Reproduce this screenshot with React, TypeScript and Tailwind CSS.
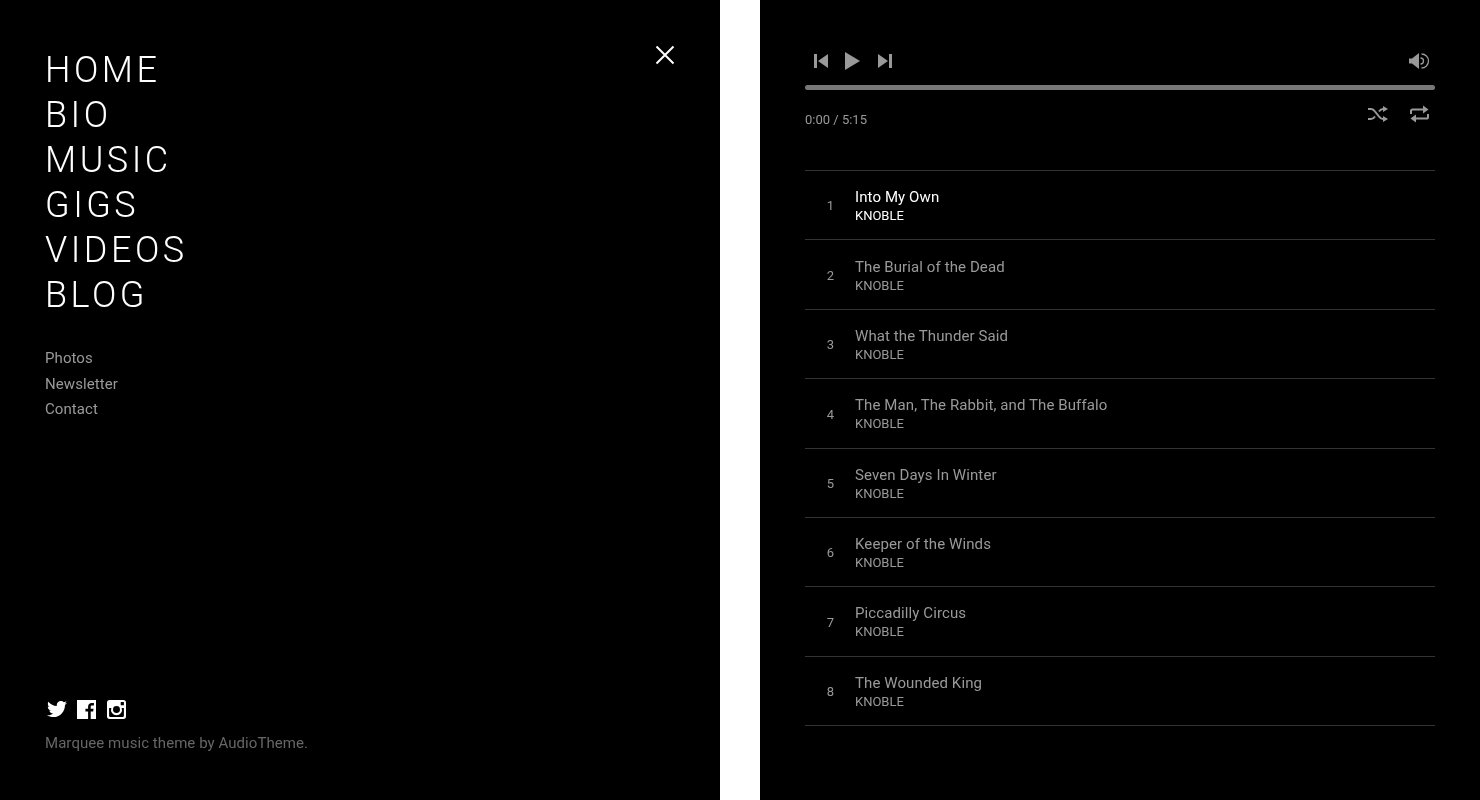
import { FaTwitter } from "react-icons/fa";

const navItems = ["HOME", "BIO", "MUSIC", "GIGS", "VIDEOS", "BLOG"];
const subItems = ["Photos", "Newsletter", "Contact"];
const tracks = [
  "Into My Own",
  "The Burial of the Dead",
  "What the Thunder Said",
  "The Man, The Rabbit, and The Buffalo",
  "Seven Days In Winter",
  "Keeper of the Winds",
  "Piccadilly Circus",
  "The Wounded King",
];

const FacebookIcon = () => (
  <svg width="19" height="19" viewBox="0 0 18 18" className="block">
    <path
      fill="#fff"
      d="M0 0h18v18h-5v-7h2.300l.4-2.700H13V6.600c0-.8.2-1.300 1.300-1.300H16V2.900c-.3 0-1.100-.1-2-.1-2 0-3.500 1.200-3.500 3.500v2H8V11h2.500v7H0z"
    />
  </svg>
);

const InstagramIcon = () => (
  <svg width="19" height="19" viewBox="0 0 18 18" className="block">
    <path
      fill="#fff"
      fillRule="evenodd"
      d="M2.500 0h13A2.500 2.500 0 0 1 18 2.500v13a2.500 2.500 0 0 1-2.500 2.500h-13A2.500 2.500 0 0 1 0 15.500v-13A2.500 2.500 0 0 1 2.500 0ZM13 2v3h3V2h-3ZM2 7.500v7.700c0 .5.3.8.8.8h12.400c.5 0 .8-.3.8-.8V7.500h-2.100a5.200 5.200 0 1 1-9.800 0H2ZM9 5.600a3.300 3.300 0 1 0 0 6.600 3.300 3.300 0 0 0 0-6.600Z"
    />
  </svg>
);

const PlayerControls = () => (
  <div className="flex items-center pl-[9px] h-[24px]">
    <svg width="14" height="14" viewBox="0 0 14 14" fill="#999" className="block">
      <path d="M0 0h3v14H0zM14 0v14L4 7z" />
    </svg>
    <svg width="15" height="18" viewBox="0 0 15 18" fill="#999" className="block ml-[17px]">
      <path d="M0 0l15 9L0 18z" />
    </svg>
    <svg width="14" height="14" viewBox="0 0 14 14" fill="#999" className="block ml-[18px]">
      <path d="M0 0v14l10-7zM11 0h3v14h-3z" />
    </svg>
  </div>
);

const VolumeIcon = () => (
  <svg width="21" height="18" viewBox="0 0 21 18" className="block mr-[5px]">
    <path fill="#999" d="M0 6.500h3L10 1v16L3 11.500H0z" />
    <path fill="none" stroke="#999" strokeWidth="1.300" d="M11.500 6a3 3 0 0 1 0 6M12.500 2a7 7 0 0 1 0 14" />
  </svg>
);

const ShuffleIcon = () => (
  <svg width="20" height="16" viewBox="0 0 20 16" className="block mt-[1px]">
    <path
      fill="none"
      stroke="#999"
      strokeWidth="2"
      d="M0 3h3c2 0 3 1 4 2.500l4 5c1 1.500 2 2.500 4 2.500h1M0 13h3c2 0 3-1 4-2.500M11 5.500C12 4 13 3 15 3h1"
    />
    <path fill="#999" d="M15 0l5 3-5 3zM15 10l5 3-5 3z" />
  </svg>
);

const RepeatIcon = () => (
  <svg width="19" height="18" viewBox="0 0 19 18" className="block">
    <path fill="none" stroke="#999" strokeWidth="2" d="M1 9V6c0-1 .5-1.600 1.500-1.600H14M18 9v3c0 1-.5 1.600-1.500 1.600H5" />
    <path fill="#999" d="M13 .5l5.500 4-5.500 4zM6 9.500l-5.500 4 5.500 4z" />
  </svg>
);

export default function App() {
  return (
    <div className="flex h-screen w-full bg-white font-['Roboto',sans-serif]">
      <aside className="w-[720px] bg-black flex flex-col px-[45px] pt-[48px] pb-[45px]">
        <div className="flex justify-between">
          <nav className="will-change-transform">
            {navItems.map((item) => (
              <div key={item} className="text-[36px] leading-[45px] font-light tracking-[3.5px] text-white">
                {item}
              </div>
            ))}
          </nav>
          <svg width="20" height="20" viewBox="0 0 20 20" className="block mt-[-3px]">
            <path stroke="#fff" strokeWidth="2" d="M1.500 1.500l17 17M18.500 1.500l-17 17" />
          </svg>
        </div>
        <div className="mt-[28px] will-change-transform">
          {subItems.map((item) => (
            <div key={item} className="text-[15px] leading-[25.500px] tracking-[0.08px] text-[#999]">
              {item}
            </div>
          ))}
        </div>
        <div className="mt-auto">
          <div className="flex items-center pl-[2px] text-white">
            <FaTwitter className="w-[20px] h-[20px]" />
            <div className="ml-[10px]">
              <FacebookIcon />
            </div>
            <div className="ml-[11px]">
              <InstagramIcon />
            </div>
          </div>
          <p className="mt-[12px] text-[15px] leading-[24px] tracking-[0.06px] text-[#666] will-change-transform">
            Marquee music theme by AudioTheme.
          </p>
        </div>
      </aside>

      <div className="w-[40px] bg-white" />

      <main className="w-[720px] bg-black px-[45px] pt-[49px]">
        <div className="flex items-center justify-between">
          <PlayerControls />
          <VolumeIcon />
        </div>
        <div className="mt-[12px] h-[5px] rounded-full bg-[#777]" />
        <div className="flex items-start justify-between mt-[16px] h-[64px]">
          <span className="text-[13px] leading-[28px] text-[#999] will-change-transform">0:00 / 5:15</span>
          <div className="flex gap-[22px] pr-[6px] mt-[-1px]">
            <ShuffleIcon />
            <RepeatIcon />
          </div>
        </div>
        <ol className="border-t border-[#333] will-change-transform">
          {tracks.map((title, i) => (
            <li key={title} className="flex items-center h-[69.375px] border-b border-[#333]">
              <span className="w-[50px] pr-[21px] pt-[2px] text-right text-[13px] text-[#999]">{i + 1}</span>
              <div className={`pt-[3px] ${i === 0 ? "text-white" : "text-[#999]"}`}>
                <div className="text-[15px] leading-[19px] tracking-[0.1px]">{title}</div>
                <div className="text-[13px] leading-[18px]">KNOBLE</div>
              </div>
            </li>
          ))}
        </ol>
      </main>
    </div>
  );
}
